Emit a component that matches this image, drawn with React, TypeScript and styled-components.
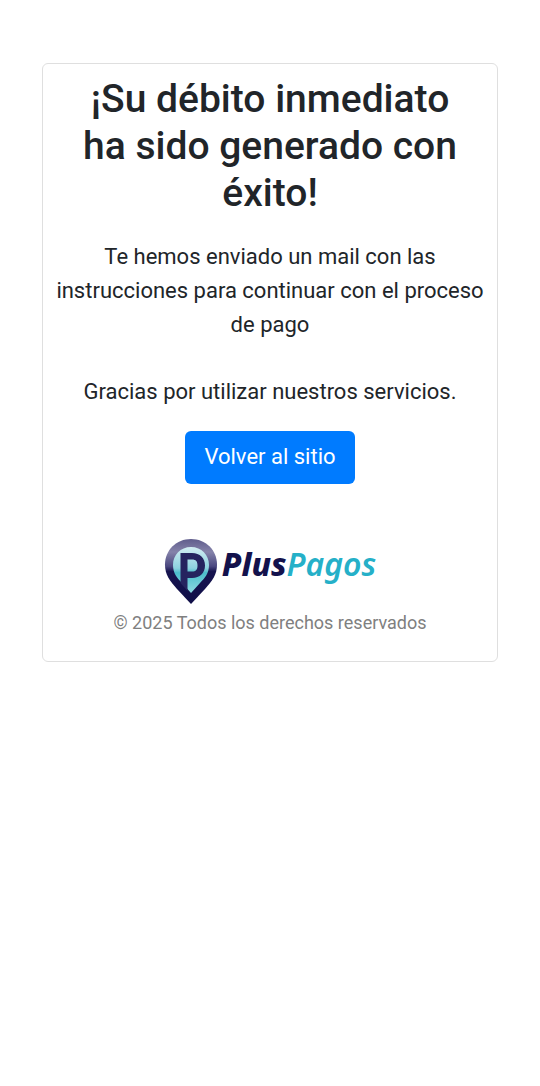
import React from "react";
import styled, { createGlobalStyle } from "styled-components";

const GlobalStyle = createGlobalStyle`
  *, *::before, *::after { box-sizing: border-box; }
  body {
    margin: 0;
    background: #fff;
    color: #212529;
    font-family: Roboto, "Liberation Sans", sans-serif;
    font-size: 22px;
    line-height: 34px;
  }
`;

const Page = styled.main`
  padding: 63px 42px;
`;

const Card = styled.section`
  display: flex;
  flex-direction: column;
  align-items: center;
  max-width: 720px;
  margin: 0 auto;
  padding: 12px 6px 21px;
  border: 1px solid #dfdfdf;
  border-radius: 6px;
  text-align: center;
`;

const Title = styled.h1`
  margin: 0 0 23px;
  padding: 0 22px;
  font-size: 39px;
  font-weight: 500;
  line-height: 47px;
`;

const Message = styled.p`
  margin: 0 0 33px;
`;

const Thanks = styled(Message)`
  margin-bottom: 22px;
`;

const BackButton = styled.button`
  padding: 9px 19px 10px;
  border: 0;
  border-radius: 6px;
  background: #007bff;
  color: #fff;
  font: inherit;
  cursor: pointer;
`;

const Footer = styled.footer`
  display: flex;
  flex-direction: column;
  align-items: center;
  gap: 1px;
  margin-top: 54px;
  color: #808080;
  font-size: 18px;
`;

const Brand = styled.div`
  display: flex;
  align-items: flex-start;
  gap: 4px;
`;

const BrandName = styled.span`
  padding-top: 8px;
  color: #25b0c8;
  font-family: "Noto Sans", "Open Sans", sans-serif;
  font-size: 32px;
  font-style: italic;
  font-weight: 600;
  line-height: 36px;
`;

const BrandStrong = styled.strong`
  color: #13124c;
  font-weight: 800;
`;

const Copyright = styled.small`
  font-size: inherit;
`;

function PinLogo() {
  return (
    <svg width="54" height="67" viewBox="0 0 54 67" aria-hidden="true">
      <defs>
        <linearGradient id="pin" x1="0" y1="0" x2="0" y2="1">
          <stop offset="0" stopColor="#5f5c8c" />
          <stop offset="0.2" stopColor="#8583aa" />
          <stop offset="0.42" stopColor="#4b4880" />
          <stop offset="0.5" stopColor="#17144f" />
          <stop offset="1" stopColor="#0f0e48" />
        </linearGradient>
        <linearGradient id="face" x1="0" y1="0" x2="0" y2="1">
          <stop offset="0" stopColor="#d2edf3" />
          <stop offset="0.46" stopColor="#8dd2df" />
          <stop offset="0.56" stopColor="#4bbccb" />
          <stop offset="1" stopColor="#8ed9e2" />
        </linearGradient>
      </defs>
      <path
        d="M27 1C12.500 1 1 12 1 26.500C1 37 6 43 13 51L27 66L41 51C48 43 53 37 53 26.500C53 12 41.500 1 27 1Z"
        fill="url(#pin)"
      />
      <path
        d="M27 9C16.500 9 9 17 9 27C9 35 13 40 18 45L27 55L36 45C41 40 45 35 45 27C45 17 37.500 9 27 9Z"
        fill="url(#face)"
      />
      <path
        fillRule="evenodd"
        d="M16.500 15H28C36 15 41 20 41 27.500C41 35 36 40 28 40H23.500V53L16.500 45ZM23.500 21.500V33.500H28C32 33.500 33.500 31.500 33.500 27.500C33.500 23.500 32 21.500 28 21.500Z"
        fill="#25235f"
      />
    </svg>
  );
}

export default function App() {
  return (
    <>
      <GlobalStyle />
      <Page>
        <Card>
          <Title>¡Su débito inmediato ha sido generado con éxito!</Title>
          <Message>
            Te hemos enviado un mail con las instrucciones para continuar con el proceso de pago
          </Message>
          <Thanks>Gracias por utilizar nuestros servicios.</Thanks>
          <BackButton type="button">Volver al sitio</BackButton>
          <Footer>
            <Brand>
              <PinLogo />
              <BrandName>
                <BrandStrong>Plus</BrandStrong>Pagos
              </BrandName>
            </Brand>
            <Copyright>© 2025 Todos los derechos reservados</Copyright>
          </Footer>
        </Card>
      </Page>
    </>
  );
}
